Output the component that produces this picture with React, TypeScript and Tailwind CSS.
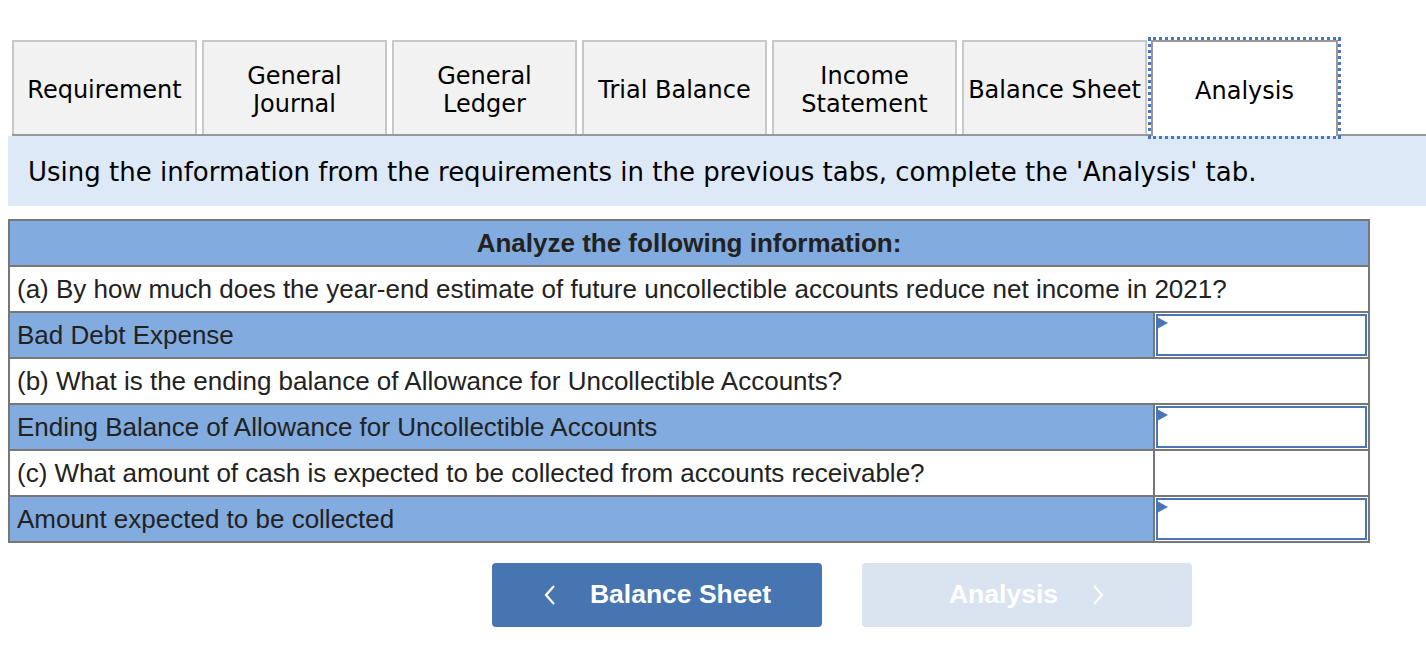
import React from "react"

const tabs = [
    ["Requirement"],
    ["General", "Journal"],
    ["General", "Ledger"],
    ["Trial Balance"],
    ["Income", "Statement"],
    ["Balance Sheet"],
]

const verdana = { fontFamily: "'DejaVu Sans', Verdana, sans-serif" }

function AnswerCell() {
    return (
        <div className="w-[215px] shrink-0 border-l-2 border-[#777] p-[1px] bg-white">
            <div className="relative h-full border-2 border-[#4a76b5] bg-white">
                <div className="absolute left-[-1px] top-[1px] w-0 h-0 border-y-[6px] border-y-transparent border-l-[11px] border-l-[#4a76b5]" />
            </div>
        </div>
    )
}

function Row({ label, blue, input, split }: { label: string; blue?: boolean; input?: boolean; split?: boolean }) {
    return (
        <div className={`flex h-[46px] border-t-2 border-[#777] ${blue ? "bg-[#82abdf]" : "bg-white"}`}>
            <div className="flex-1 flex items-center pl-[7px] text-[26px] text-[#222] whitespace-nowrap">{label}</div>
            {input && <AnswerCell />}
            {split && <div className="w-[215px] shrink-0 border-l-2 border-[#777] bg-white" />}
        </div>
    )
}

export default function App() {
    return (
        <div className="w-[1426px] h-[652px] bg-white pt-[40px] overflow-hidden">
            <div className="flex ml-[12px] h-[96px] border-b-2 border-[#999]">
                {tabs.map((t, i) => (
                    <div
                        key={i}
                        className="w-[185px] mr-[5px] border-2 border-b-0 border-[#c8c8c8] bg-[#f2f2f2] flex flex-col items-center justify-center pt-[3px] text-[24px] leading-[28px] text-black"
                        style={verdana}
                    >
                        {t.map((line) => <span key={line}>{line}</span>)}
                    </div>
                ))}
                <div
                    className="w-[187px] ml-[-1px] -mb-[2px] border-2 border-b-0 border-[#999] bg-white flex items-center justify-center pt-[3px] text-[24px] text-black outline-[3px] outline-dotted outline-[#4a76c0]"
                    style={verdana}
                >
                    Analysis
                </div>
            </div>

            <div
                className="ml-[8px] h-[70px] bg-[#dde9f7] flex items-center pl-[20px] pt-[2px] text-[26px] text-black whitespace-nowrap"
                style={verdana}
            >
                Using the information from the requirements in the previous tabs, complete the 'Analysis' tab.
            </div>

            <div
                className="ml-[8px] mt-[13px] w-[1362px] border-2 border-t-0 border-[#777]"
                style={{ fontFamily: "'Liberation Sans', Arial, sans-serif" }}
            >
                <div className="h-[46px] border-t-2 border-[#777] bg-[#82abdf] flex items-center justify-center text-[26px] font-bold text-[#222]">
                    Analyze the following information:
                </div>
                <Row label="(a) By how much does the year-end estimate of future uncollectible accounts reduce net income in 2021?" />
                <Row label="Bad Debt Expense" blue input />
                <Row label="(b) What is the ending balance of Allowance for Uncollectible Accounts?" />
                <Row label="Ending Balance of Allowance for Uncollectible Accounts" blue input />
                <Row label="(c) What amount of cash is expected to be collected from accounts receivable?" split />
                <Row label="Amount expected to be collected" blue input />
            </div>

            <div className="flex ml-[492px] mt-[20px] gap-[40px]" style={{ fontFamily: "'Liberation Sans', Arial, sans-serif" }}>
                <div className="w-[330px] h-[64px] rounded-[4px] bg-[#4775b2] flex items-center justify-center text-white text-[26.5px] font-bold">
                    <svg width="14" height="22" viewBox="0 0 14 22" className="mr-[33px]">
                        <path d="M11 2 L3 11 L11 20" fill="none" stroke="white" strokeWidth="2.2" />
                    </svg>
                    <span>Balance Sheet</span>
                </div>
                <div className="w-[330px] h-[64px] rounded-[4px] bg-[#dae4f0] flex items-center justify-center text-white text-[26.5px] font-bold">
                    <span>Analysis</span>
                    <svg width="14" height="22" viewBox="0 0 14 22" className="ml-[33px]">
                        <path d="M3 2 L11 11 L3 20" fill="none" stroke="white" strokeWidth="2.2" />
                    </svg>
                </div>
            </div>
        </div>
    )
}
